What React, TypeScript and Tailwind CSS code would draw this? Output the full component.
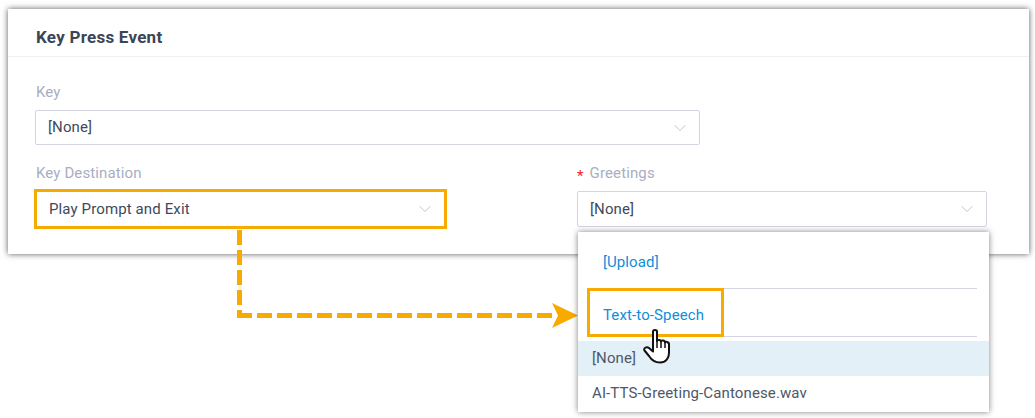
import { ChevronDown } from 'lucide-react';

const Select = ({ value, className = '' }: { value: string; className?: string }) => (
  <div className={`flex items-center justify-between rounded-[2px] border border-[#d3d5e3] bg-white pl-3 pr-[9px] text-[15px] text-[#3d4a5c] ${className}`}>
    <span>{value}</span>
    <ChevronDown size={20} strokeWidth={1} className="text-[#b4b7c6]" />
  </div>
);

const Label = ({ children }: { children: React.ReactNode }) => (
  <p className="h-[19px] pl-px text-[15px] leading-[19px] text-[#a9aec2]">{children}</p>
);

const App = () => {
  return (
    <div className="relative h-[418px] w-[1035px] overflow-hidden bg-white pt-[9px] pl-[8px] font-['Roboto',sans-serif] tracking-[0.12px]">
      {/* Card */}
      <div className="h-[245px] w-[1021px] bg-white shadow-[0_0_6px_rgba(0,0,0,0.65)]">
        <div className="flex h-[48px] items-center border-b border-[#eef0f4] pl-[28px] pt-[11px]">
          <h2 className="text-[17px] font-bold tracking-[0.25px] text-[#3a4555]">Key Press Event</h2>
        </div>
        <div className="pt-[26px] pl-[27px]">
          <Label>Key</Label>
          <Select value="[None]" className="mt-[8px] h-[35px] w-[665px]" />
          <div className="mt-[19px] flex gap-[132px]">
            <div className="w-[410px]">
              <Label>Key Destination</Label>
              {/* highlighted field */}
              <div className="mt-[6px] flex h-[40px] w-[413px] -translate-x-[1px] items-center justify-between border-[3px] border-[#f7ab00] bg-white pl-[12px] pr-[9px] text-[15px] text-[#3d4a5c]">
                <span>Play Prompt and Exit</span>
                <ChevronDown size={20} strokeWidth={1} className="text-[#b4b7c6]" />
              </div>
            </div>
            <div className="w-[410px]">
              <Label>
                <span className="relative top-[3px] mr-[6px] -ml-px text-[#f5222d]">*</span>
                Greetings
              </Label>
              <Select value="[None]" className="mt-[8px] h-[36px] w-[410px]" />
            </div>
          </div>
        </div>
      </div>

      {/* Dashed arrow */}
      <svg className="absolute top-0 left-0" width="1035" height="418" fill="none">
        <path d="M239.5 230V318" stroke="#f7ab00" strokeWidth="5" strokeDasharray="15 5" />
        <path d="M237 315.5H556" stroke="#f7ab00" strokeWidth="5" strokeDasharray="15 5" />
        <path d="M552 303L578 315.5L552 328L558 315.5Z" fill="#f7ab00" />
      </svg>

      {/* Dropdown */}
      <div className="absolute top-[232px] left-[578px] h-[180px] w-[411px] bg-white text-[15px] shadow-[0_0_6px_rgba(0,0,0,0.5)]">
        <div className="flex h-[56px] items-center pl-[25px] pt-[5px] text-[#0f8ed8]">[Upload]</div>
        <div className="mr-[12px] ml-[10px] h-px bg-[#d3d5e3]" />
        <div className="flex h-[47px] items-center pl-[25px] pt-[6px] text-[#0f8ed8]">Text-to-Speech</div>
        <div className="mr-[12px] ml-[10px] h-px bg-[#d3d5e3]" />
        <div className="mt-[4px] flex h-[35px] items-center bg-[#e4f0f8] pl-[14px] text-[#4e5868]">[None]</div>
        <div className="flex h-[35px] items-center pl-[14px] text-[#4e5868]">AI-TTS-Greeting-Cantonese.wav</div>
      </div>

      {/* Highlight box over Text-to-Speech */}
      <div className="absolute top-[288px] left-[587px] h-[49px] w-[137px] border-[3px] border-[#f7ab00]" />

      {/* Hand cursor */}
      <svg className="absolute top-[328px] left-[642px]" width="30" height="36" viewBox="0 0 30 36">
        <path
          d="M11 3.5C11 1.5 15 1.5 15 3.5V13C15 11.5 19 11.5 19 13.5C19 12 23 12 23 14.5C23 13.5 27 13.5 27 16V25C27 30 24 34.5 18 34.5C12 34.5 9.5 32 7 28L2.5 22.5C1 20.5 4.5 18 7 20L11 23.5Z"
          fill="#fff"
          stroke="#111"
          strokeWidth="2"
          strokeLinejoin="round"
        />
        <path d="M15 13V20M19 13.5V20M23 14.5V20" stroke="#111" strokeWidth="1.5" />
      </svg>
    </div>
  );
};

export default App;
